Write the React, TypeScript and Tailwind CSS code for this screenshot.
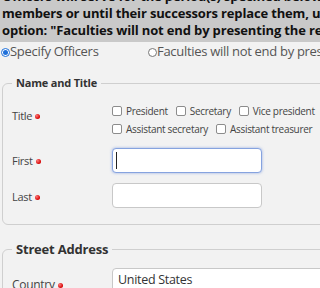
import React from "react";

const titles = [
    ["President", "Secretary", "Vice president", "Treasurer"],
    ["Assistant secretary", "Assistant treasurer", "Other"],
];

function Required() {
    return (
        <span className="ml-[3px] inline-block h-[5px] w-[5px] rounded-full bg-[radial-gradient(circle_at_35%_35%,#ff7a7a,#d40000_70%)]" />
    );
}

function Check({ label }: { label: string }) {
    return (
        <label className="flex items-center gap-[4px] whitespace-nowrap">
            <span className="h-[10px] w-[10px] rounded-[2px] border border-[#8c8c8c] bg-white" />
            <span>{label}</span>
        </label>
    );
}

export default function App() {
    return (
        <div className="h-screen w-screen overflow-hidden bg-[#f2f2f2] font-['Open_Sans',sans-serif] text-[#444]">
            <div className="w-[620px]">
                {/* Notice */}
                <div className="-mt-[12px] bg-[#c9c9c9] pb-[3px] pl-[2px] text-[13px] font-bold leading-[17px] tracking-[-0.15px] text-[#111]">
                    <p>Officers will serve for the period(s) specified below, and until the end of their terms as</p>
                    <p>members or until their successors replace them, unless you choose this</p>
                    <p>option: "Faculties will not end by presenting the resignation of officers"</p>
                </div>

                {/* Mode */}
                <div className="flex h-[20px] items-center text-[13px] tracking-[-0.3px] text-[#555]">
                    <label className="flex w-[148px] items-center">
                        <span className="ml-[1px] flex h-[9px] w-[9px] items-center justify-center rounded-full border border-[#1e6fd9] bg-white">
                            <span className="h-[5px] w-[5px] rounded-full bg-[#1e6fd9]" />
                        </span>
                        <span>Specify Officers</span>
                    </label>
                    <label className="flex items-center">
                        <span className="h-[9px] w-[9px] rounded-full border border-[#777] bg-white" />
                        <span>Faculties will not end by presenting the resignation</span>
                    </label>
                </div>

                {/* Name and Title */}
                <fieldset className="ml-[2px] mt-[13px] rounded-[6px] border border-[#cfcfcf] pb-[16px] pl-[9px] pt-[11px]">
                    <legend className="px-[4px] text-[11px] font-bold leading-[16px] tracking-[-0.2px] text-[#333]">
                        Name and Title
                    </legend>
                    <div className="grid grid-cols-[100px_1fr] gap-y-[10px] text-[11px] tracking-[-0.3px]">
                        <div className="mt-[5px] flex h-[18px] items-center">Title<Required /></div>
                        <div className="flex flex-col text-[10px] text-[#444]">
                            {titles.map((row, i) => (
                                <div key={i} className="flex h-[18px] items-center gap-[8px]">
                                    {row.map((t) => (
                                        <Check key={t} label={t} />
                                    ))}
                                </div>
                            ))}
                        </div>

                        <div className="flex items-center pt-[2px]">First<Required /></div>
                        <div className="flex h-[25px] w-[150px] items-center rounded-[4px] border border-[#86a3df] bg-white pl-[3px] shadow-[0_0_3px_rgba(90,130,220,0.6)]">
                            <span className="h-[17px] w-px bg-[#222]" />
                        </div>

                        <div className="flex items-center pt-[3px]">Last<Required /></div>
                        <div className="h-[25px] w-[150px] rounded-[4px] border border-[#c8c8c8] bg-white" />
                    </div>
                </fieldset>

                {/* Street Address */}
                <fieldset className="ml-[2px] mt-[14px] rounded-[6px] border border-[#cfcfcf] pb-[16px] pl-[9px] pt-[9px]">
                    <legend className="px-[4px] text-[13px] font-bold leading-[20px] tracking-[-0.2px] text-[#333]">
                        Street Address
                    </legend>
                    <div className="grid grid-cols-[100px_1fr] text-[11px] tracking-[-0.3px]">
                        <div className="mt-[8px] flex items-center text-[12px]">Country<Required /></div>
                        <div className="flex h-[25px] w-[300px] items-center rounded-[4px] border border-[#c8c8c8] bg-white pl-[5px] text-[12.5px] text-[#333]">
                            United States
                        </div>
                    </div>
                </fieldset>
            </div>
        </div>
    );
}
